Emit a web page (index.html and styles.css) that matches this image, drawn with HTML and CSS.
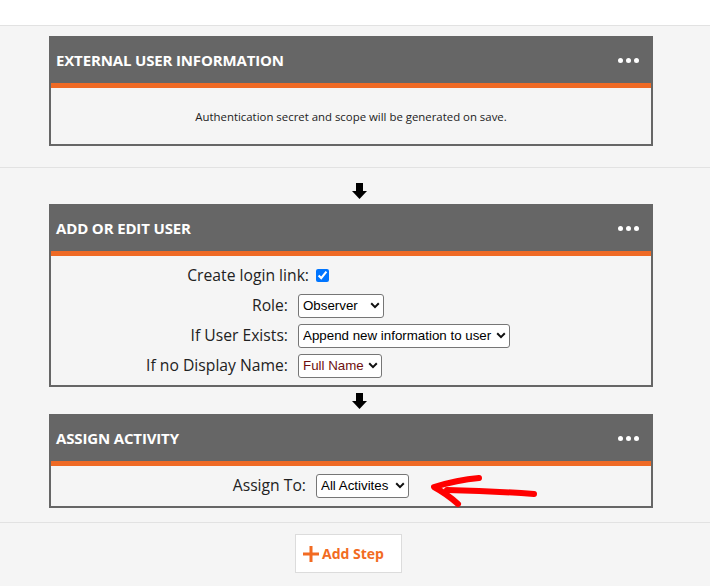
FILE: index.html
```html
<!DOCTYPE html>
<html lang="en">
<head>
<meta charset="utf-8">
<title>Workflow</title>
<link rel="stylesheet" href="styles.css">
</head>
<body>
<div class="topbar"></div>

<section class="section-top">
  <div class="card">
    <div class="card-head">
      <h2 class="card-title">EXTERNAL USER INFORMATION</h2>
      <span class="dots"><i></i><i></i><i></i></span>
    </div>
    <div class="card-body note">Authentication secret and scope will be generated on save.</div>
  </div>
</section>

<section class="flow">
  <div class="arrow"><svg width="15" height="16" viewBox="0 0 15 16"><path d="M4 0h7v8h4l-7.5 8L0 8h4z" fill="#000"/></svg></div>

  <div class="card">
    <div class="card-head">
      <h2 class="card-title">ADD OR EDIT USER</h2>
      <span class="dots"><i></i><i></i><i></i></span>
    </div>
    <div class="card-body form">
      <div class="row-check">
        <label class="lbl" for="cl">Create login link:</label>
        <input id="cl" class="check" type="checkbox" checked>
      </div>
      <div class="grid">
        <label class="lbl">Role:</label>
        <div class="sel w-role"><select><option>Observer</option></select><svg class="chev" width="10" height="7" viewBox="0 0 10 7"><path d="M1.2 1.3L5 5.1l3.8-3.8" fill="none" stroke="#111" stroke-width="2"/></svg></div>
        <label class="lbl">If User Exists:</label>
        <div class="sel w-exists"><select><option>Append new information to user</option></select><svg class="chev" width="10" height="7" viewBox="0 0 10 7"><path d="M1.2 1.3L5 5.1l3.8-3.8" fill="none" stroke="#111" stroke-width="2"/></svg></div>
        <label class="lbl">If no Display Name:</label>
        <div class="sel w-name"><select class="maroon"><option>Full Name</option></select><svg class="chev" width="10" height="7" viewBox="0 0 10 7"><path d="M1.2 1.3L5 5.1l3.8-3.8" fill="none" stroke="#111" stroke-width="2"/></svg></div>
      </div>
    </div>
  </div>

  <div class="arrow arrow-2"><svg width="15" height="16" viewBox="0 0 15 16"><path d="M4 0h7v8h4l-7.5 8L0 8h4z" fill="#000"/></svg></div>

  <div class="card">
    <div class="card-head">
      <h2 class="card-title">ASSIGN ACTIVITY</h2>
      <span class="dots"><i></i><i></i><i></i></span>
    </div>
    <div class="card-body assign">
      <label class="lbl">Assign To:</label>
      <div class="sel w-assign"><select><option>All Activites</option></select><svg class="chev" width="10" height="7" viewBox="0 0 10 7"><path d="M1.2 1.3L5 5.1l3.8-3.8" fill="none" stroke="#111" stroke-width="2"/></svg></div>
      <svg class="scribble" width="120" height="42" viewBox="0 0 120 42"><path d="M54 8 Q32 10 9 17 Q22 24 33 34" fill="none" stroke="#ff0000" stroke-width="6" stroke-linecap="round" stroke-linejoin="round"/><path d="M22 20 Q68 21 109 24" fill="none" stroke="#ff0000" stroke-width="6" stroke-linecap="round"/></svg>
    </div>
  </div>
</section>

<div class="actions">
  <button class="add-step" type="button"><svg width="16" height="16" viewBox="0 0 16 16"><path d="M8 0v16M0 8h16" stroke="#f26b22" stroke-width="3"/></svg><span>Add Step</span></button>
</div>
</body>
</html>
```

FILE: styles.css
```css
* { box-sizing: border-box; }

body {
  margin: 0;
  background: #f5f5f5;
  font-family: "Open Sans", "Noto Sans", sans-serif;
  color: #222;
}

.topbar {
  height: 26px;
  background: #fff;
  border-bottom: 1px solid #e2e2e2;
}

.section-top {
  padding: 10px 0 21px 49px;
  border-bottom: 1px solid #e2e2e2;
}

.card {
  width: 604px;
  border: 2px solid #666;
}

.card-head {
  height: 50px;
  background: #666;
  border-bottom: 5px solid #ef6a25;
  display: flex;
  align-items: center;
  justify-content: space-between;
  padding: 0 12px 0 5px;
}

.card-title {
  margin: 0;
  font-size: 15px;
  font-weight: 700;
  color: #fff;
  letter-spacing: -0.15px;
  line-height: 20px;
  position: relative;
  top: -1px;
}

.dots {
  display: flex;
  gap: 3px;
}

.dots i {
  width: 5px;
  height: 5px;
  border-radius: 50%;
  background: #fff;
}

.card-body {
  background: #f5f5f5;
}

.note {
  height: 56px;
  display: flex;
  align-items: center;
  justify-content: center;
  font-size: 11.4px;
  color: #222;
}

.form {
  padding: 7px 0 8px;
}

.lbl {
  font-size: 15.7px;
  color: #222;
  text-align: right;
  line-height: 24px;
}

.row-check {
  display: grid;
  grid-template-columns: 258px auto;
  column-gap: 7px;
  align-items: center;
  height: 24px;
  margin-bottom: 6px;
}

.check {
  margin: 0;
  width: 13px;
  height: 13px;
}

.grid {
  display: grid;
  grid-template-columns: 237px auto;
  column-gap: 10px;
  row-gap: 6px;
  align-items: center;
}

.sel {
  position: relative;
  height: 24px;
}

.sel select {
  appearance: none;
  -webkit-appearance: none;
  width: 100%;
  height: 24px;
  margin: 0;
  padding: 0 0 0 4px;
  border: 1px solid #767676;
  border-radius: 3px;
  background: #fff;
  font-family: "Liberation Sans", Arial, sans-serif;
  font-size: 13.333px;
  color: #000;
}

.sel select.maroon { color: #6e0f0f; }

.chev {
  position: absolute;
  right: 4px;
  top: 9px;
  pointer-events: none;
}

.w-role { width: 86px; }
.w-exists { width: 212px; }
.w-name { width: 84px; }
.w-assign { width: 93px; }

.flow {
  padding: 15px 0 14px 49px;
  border-bottom: 1px solid #e2e2e2;
}

.arrow {
  height: 16px;
  margin: 0 0 5px 303px;
}

.arrow svg { display: block; }

.arrow-2 { margin-top: 6px; }

.assign {
  position: relative;
  height: 40px;
  padding: 7px 0 9px;
  display: grid;
  grid-template-columns: 255px auto;
  column-gap: 10px;
  align-items: center;
}

.scribble {
  position: absolute;
  left: 374px;
  top: 4px;
}

.actions {
  padding: 11px 0 0 295px;
}

.add-step {
  width: 107px;
  height: 39px;
  background: #fff;
  border: 1px solid #dcdcdc;
  display: flex;
  align-items: center;
  gap: 3px;
  padding: 0 0 0 7px;
  font-family: "Open Sans", sans-serif;
  font-weight: 700;
  font-size: 14px;
  color: #f26b22;
  cursor: pointer;
}

.add-step svg { display: block; }
```
